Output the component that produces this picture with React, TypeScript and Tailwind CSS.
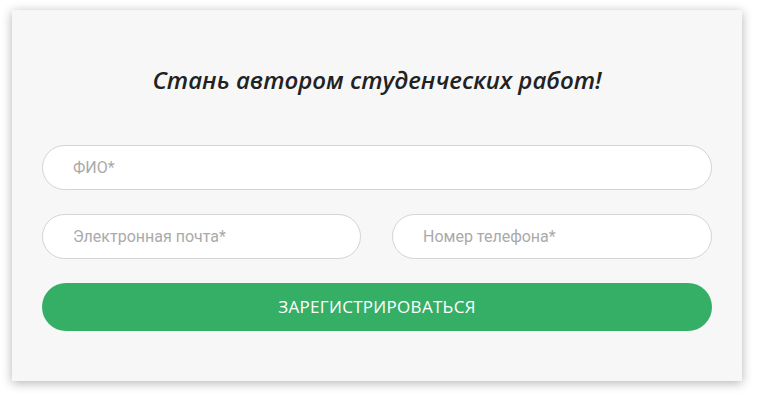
export default function App() {
  return (
    <div className="w-[760px] h-[398px] bg-white pt-[10px] pl-[12px]">
      <div className="w-[730px] h-[371px] bg-[#f7f7f7] shadow-[0_2px_10px_rgba(0,0,0,0.3)] px-[30px] pt-[54px]">
        <h1 className="text-center text-[24px] leading-[32px] italic font-semibold text-[#222] font-['Open_Sans',sans-serif]">
          Стань автором студенческих работ!
        </h1>
        <form className="mt-[49px] flex flex-col gap-[24px] font-['Roboto',sans-serif]">
          <input
            className="h-[45px] w-full rounded-full border border-[#d4d4d4] bg-white pl-[30px] text-[16px] text-[#555] placeholder:text-[#aaa] outline-none"
            placeholder="ФИО*"
          />
          <div className="flex gap-[31px]">
            <input
              className="h-[45px] w-[319px] rounded-full border border-[#d4d4d4] bg-white pl-[30px] text-[16px] text-[#555] placeholder:text-[#aaa] outline-none"
              placeholder="Электронная почта*"
            />
            <input
              className="h-[45px] flex-1 rounded-full border border-[#d4d4d4] bg-white pl-[30px] text-[16px] text-[#555] placeholder:text-[#aaa] outline-none"
              placeholder="Номер телефона*"
            />
          </div>
          <button
            type="button"
            className="h-[48px] w-full rounded-full bg-[#35ae66] text-white text-[17px] tracking-[0.3px] font-['Open_Sans',sans-serif]"
          >
            ЗАРЕГИСТРИРОВАТЬСЯ
          </button>
        </form>
      </div>
    </div>
  );
}
